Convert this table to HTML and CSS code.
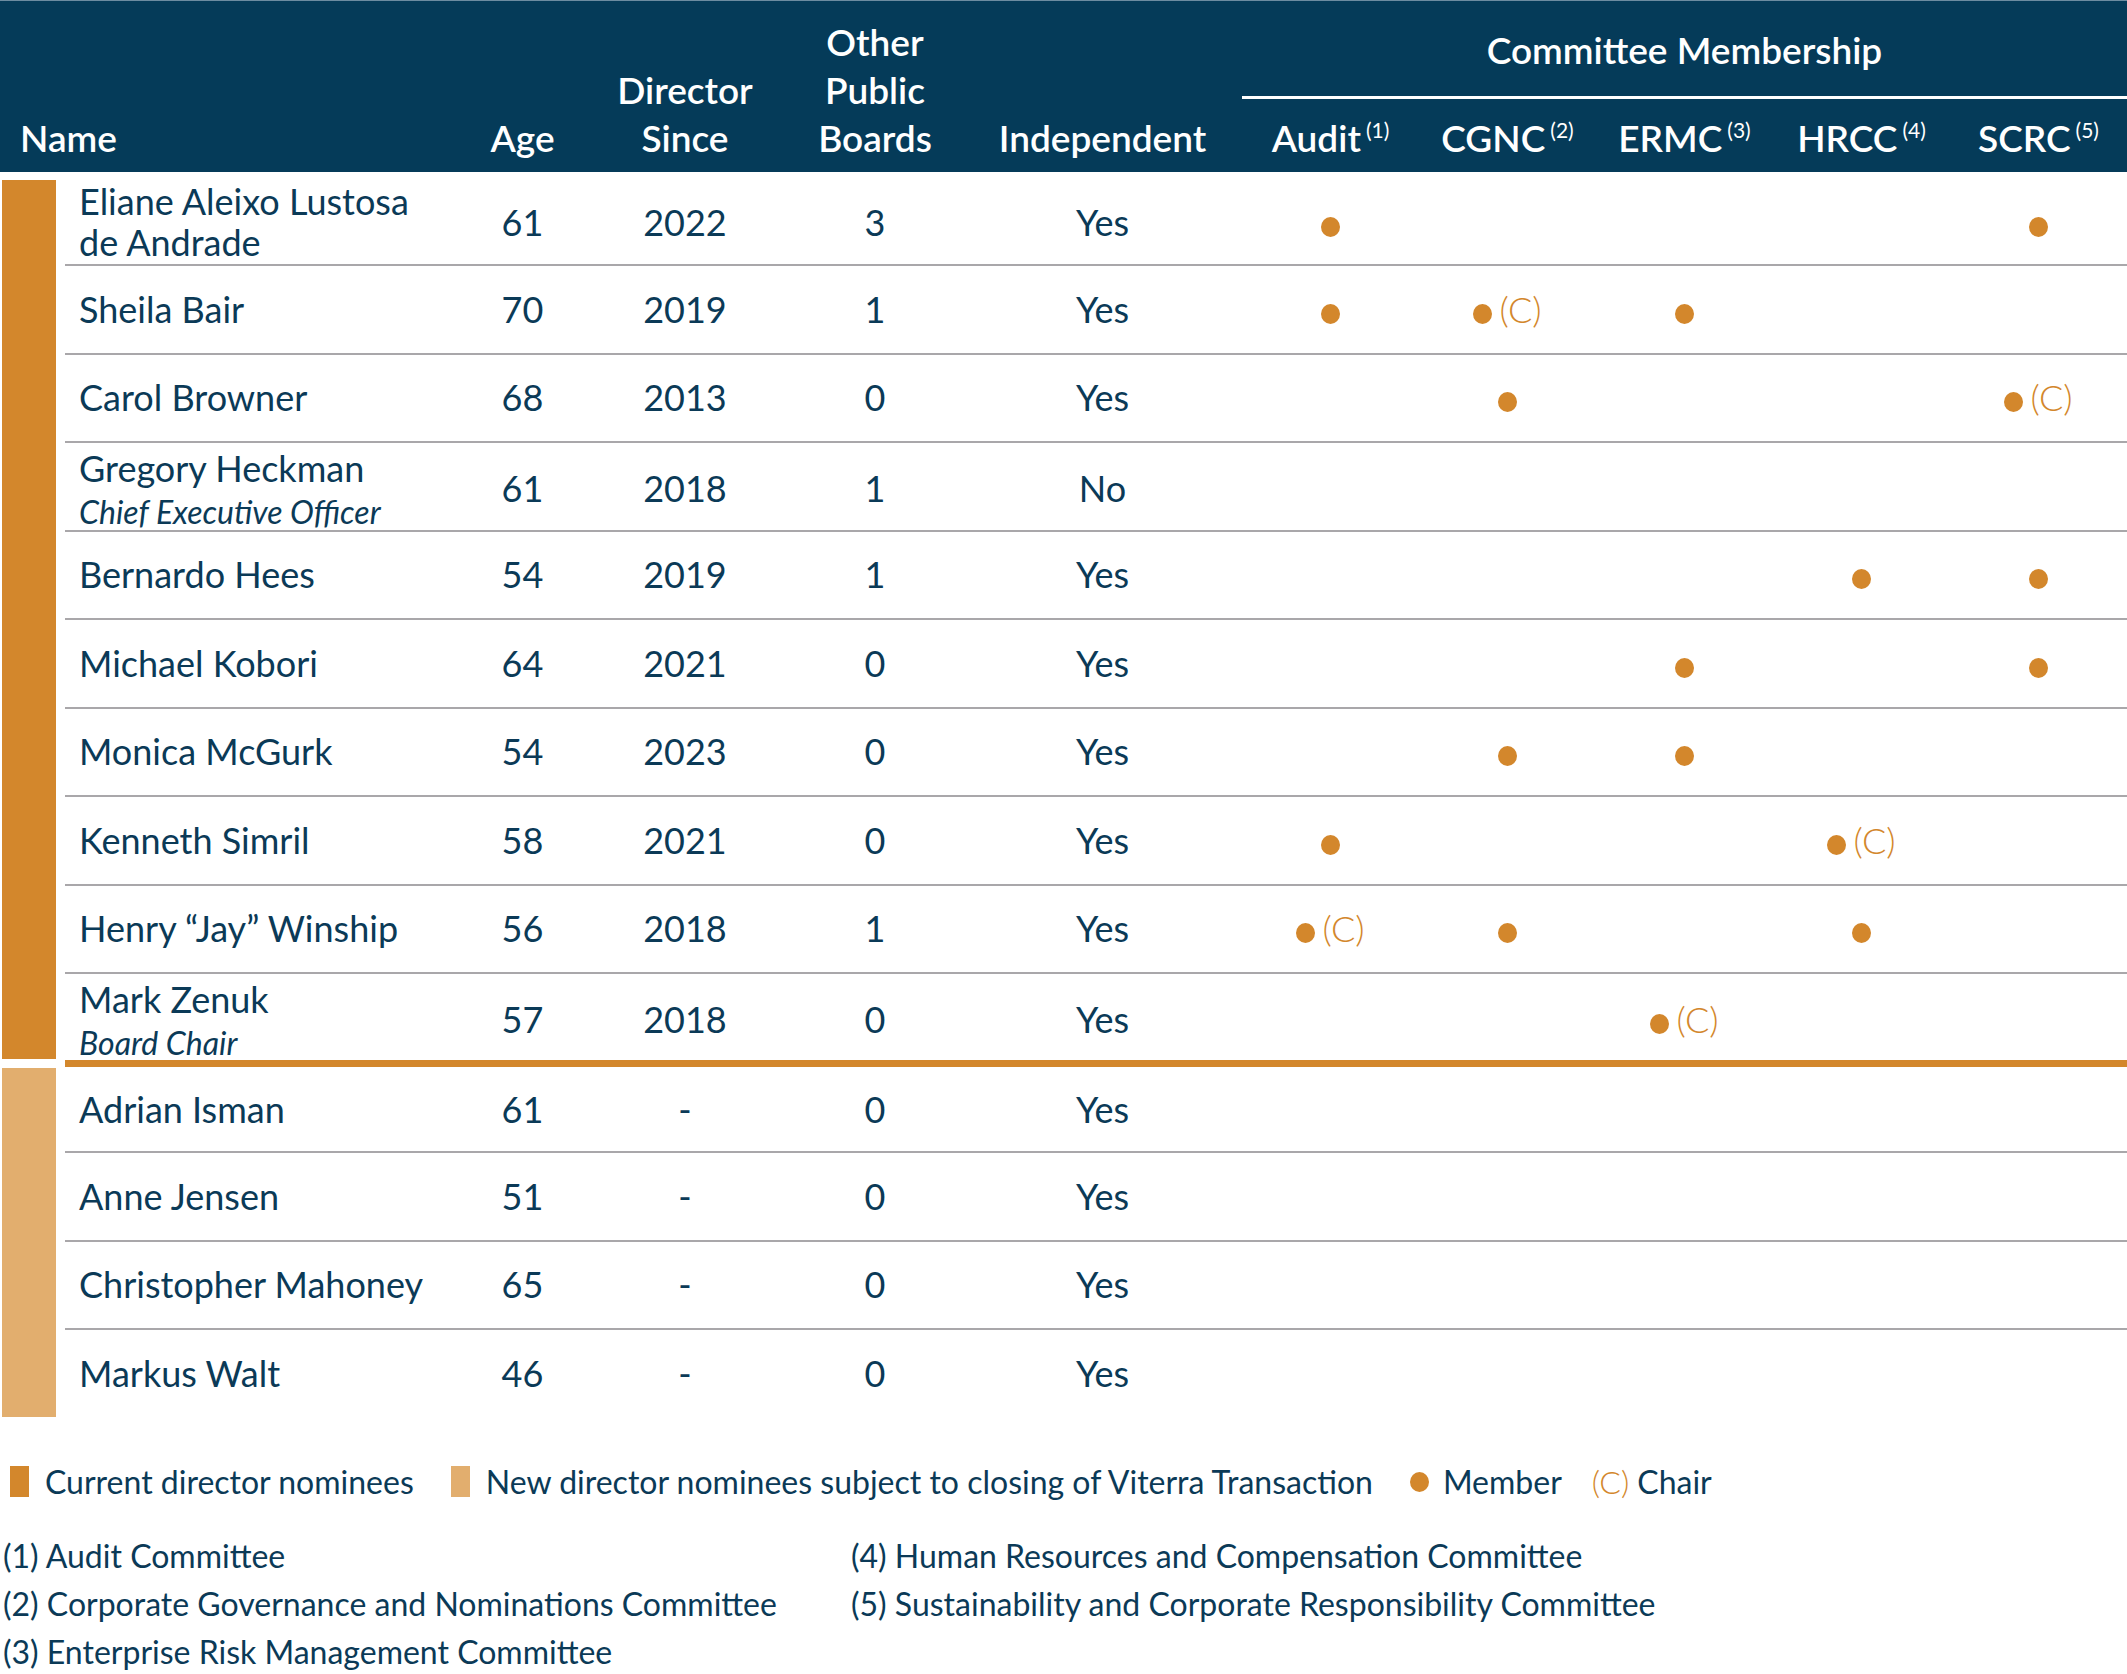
FILE: index.html
```html
<!DOCTYPE html>
<html lang="en">
<head>
<meta charset="utf-8">
<title>Director Nominees</title>
<link rel="stylesheet" href="styles.css">
</head>
<body>
<div class="board">
  <div class="thead">
    <div class="th th-name">Name</div>
    <div class="th">Age</div>
    <div class="th">Director<br>Since</div>
    <div class="th">Other<br>Public<br>Boards</div>
    <div class="th">Independent</div>
    <div class="th-committee">
      <div class="cm-title">Committee Membership</div>
      <div class="cm-rule"></div>
      <div class="cm-cols">
        <div class="th">Audit<sup>(1)</sup></div>
        <div class="th">CGNC<sup>(2)</sup></div>
        <div class="th">ERMC<sup>(3)</sup></div>
        <div class="th">HRCC<sup>(4)</sup></div>
        <div class="th">SCRC<sup>(5)</sup></div>
      </div>
    </div>
  </div>

  <div class="group current">
    <div class="bar"></div>
    <div class="rows">
      <div class="row short">
        <div class="name">Eliane Aleixo Lustosa<br>de Andrade</div>
        <div class="c">61</div><div class="c">2022</div><div class="c">3</div><div class="c">Yes</div>
        <div class="c"><span class="dot"></span></div><div class="c"></div><div class="c"></div><div class="c"></div><div class="c"><span class="dot"></span></div>
      </div>
      <div class="row">
        <div class="name">Sheila Bair</div>
        <div class="c">70</div><div class="c">2019</div><div class="c">1</div><div class="c">Yes</div>
        <div class="c"><span class="dot"></span></div><div class="c"><span class="dot"></span><span class="chair">(C)</span></div><div class="c"><span class="dot"></span></div><div class="c"></div><div class="c"></div>
      </div>
      <div class="row">
        <div class="name">Carol Browner</div>
        <div class="c">68</div><div class="c">2013</div><div class="c">0</div><div class="c">Yes</div>
        <div class="c"></div><div class="c"><span class="dot"></span></div><div class="c"></div><div class="c"></div><div class="c"><span class="dot"></span><span class="chair">(C)</span></div>
      </div>
      <div class="row">
        <div class="name has-role">Gregory Heckman<br><span class="role">Chief Executive Officer</span></div>
        <div class="c">61</div><div class="c">2018</div><div class="c">1</div><div class="c">No</div>
        <div class="c"></div><div class="c"></div><div class="c"></div><div class="c"></div><div class="c"></div>
      </div>
      <div class="row">
        <div class="name">Bernardo Hees</div>
        <div class="c">54</div><div class="c">2019</div><div class="c">1</div><div class="c">Yes</div>
        <div class="c"></div><div class="c"></div><div class="c"></div><div class="c"><span class="dot"></span></div><div class="c"><span class="dot"></span></div>
      </div>
      <div class="row">
        <div class="name">Michael Kobori</div>
        <div class="c">64</div><div class="c">2021</div><div class="c">0</div><div class="c">Yes</div>
        <div class="c"></div><div class="c"></div><div class="c"><span class="dot"></span></div><div class="c"></div><div class="c"><span class="dot"></span></div>
      </div>
      <div class="row">
        <div class="name">Monica McGurk</div>
        <div class="c">54</div><div class="c">2023</div><div class="c">0</div><div class="c">Yes</div>
        <div class="c"></div><div class="c"><span class="dot"></span></div><div class="c"><span class="dot"></span></div><div class="c"></div><div class="c"></div>
      </div>
      <div class="row">
        <div class="name">Kenneth Simril</div>
        <div class="c">58</div><div class="c">2021</div><div class="c">0</div><div class="c">Yes</div>
        <div class="c"><span class="dot"></span></div><div class="c"></div><div class="c"></div><div class="c"><span class="dot"></span><span class="chair">(C)</span></div><div class="c"></div>
      </div>
      <div class="row">
        <div class="name">Henry “Jay” Winship</div>
        <div class="c">56</div><div class="c">2018</div><div class="c">1</div><div class="c">Yes</div>
        <div class="c"><span class="dot"></span><span class="chair">(C)</span></div><div class="c"><span class="dot"></span></div><div class="c"></div><div class="c"><span class="dot"></span></div><div class="c"></div>
      </div>
      <div class="row last">
        <div class="name has-role">Mark Zenuk<br><span class="role">Board Chair</span></div>
        <div class="c">57</div><div class="c">2018</div><div class="c">0</div><div class="c">Yes</div>
        <div class="c"></div><div class="c"></div><div class="c"><span class="dot"></span><span class="chair">(C)</span></div><div class="c"></div><div class="c"></div>
      </div>
    </div>
  </div>

  <div class="divider"><div class="divider-gap"></div><div class="divider-line"></div></div>

  <div class="group new">
    <div class="bar"></div>
    <div class="rows">
      <div class="row shorter">
        <div class="name">Adrian Isman</div>
        <div class="c">61</div><div class="c">-</div><div class="c">0</div><div class="c">Yes</div>
        <div class="c"></div><div class="c"></div><div class="c"></div><div class="c"></div><div class="c"></div>
      </div>
      <div class="row">
        <div class="name">Anne Jensen</div>
        <div class="c">51</div><div class="c">-</div><div class="c">0</div><div class="c">Yes</div>
        <div class="c"></div><div class="c"></div><div class="c"></div><div class="c"></div><div class="c"></div>
      </div>
      <div class="row">
        <div class="name">Christopher Mahoney</div>
        <div class="c">65</div><div class="c">-</div><div class="c">0</div><div class="c">Yes</div>
        <div class="c"></div><div class="c"></div><div class="c"></div><div class="c"></div><div class="c"></div>
      </div>
      <div class="row end">
        <div class="name">Markus Walt</div>
        <div class="c">46</div><div class="c">-</div><div class="c">0</div><div class="c">Yes</div>
        <div class="c"></div><div class="c"></div><div class="c"></div><div class="c"></div><div class="c"></div>
      </div>
    </div>
  </div>
</div>

<div class="legend">
  <div class="lg-item"><span class="swatch swatch-current"></span><span>Current director nominees</span></div>
  <div class="lg-item"><span class="swatch swatch-new"></span><span>New director nominees subject to closing of Viterra Transaction</span></div>
  <div class="lg-item lg-member"><span class="dot"></span><span>Member</span></div>
  <div class="lg-item lg-chair"><span class="chair-l">(C)</span><span>Chair</span></div>
</div>

<div class="notes">
  <div>(1) Audit Committee</div>
  <div>(4) Human Resources and Compensation Committee</div>
  <div>(2) Corporate Governance and Nominations Committee</div>
  <div>(5) Sustainability and Corporate Responsibility Committee</div>
  <div>(3) Enterprise Risk Management Committee</div>
</div>
</body>
</html>
```

FILE: styles.css
```css
* { box-sizing: border-box; }

body {
  margin: 0;
  background: #ffffff;
  font-family: "Lato", "Liberation Sans", sans-serif;
  color: #0b3a57;
  width: 2127px;
}

/* ---------- header ---------- */
.thead {
  display: grid;
  grid-template-columns: 462px 121px 204px 176px 279px 885px;
  align-items: end;
  height: 172px;
  padding-bottom: 10px;
  background: #053b59;
  border-top: 1px solid #6d8ca1;
  color: #ffffff;
}

.th {
  font-size: 37px;
  font-weight: 600;
  line-height: 48px;
  text-align: center;
  white-space: nowrap;
}

.th-name {
  text-align: left;
  padding-left: 20px;
}

.th sup {
  font-size: 21px;
  font-weight: 400;
  line-height: 0;
  vertical-align: 14px;
  margin-left: 5px;
}

.th-committee {
  display: flex;
  flex-direction: column;
}

.cm-title {
  font-size: 37px;
  font-weight: 600;
  line-height: 48px;
  text-align: center;
}

.cm-rule {
  height: 3px;
  margin: 22px 0 15px;
  background: #ffffff;
}

.cm-cols {
  display: grid;
  grid-template-columns: repeat(5, 177px);
}

/* ---------- body ---------- */
.group {
  display: flex;
}

.group.current {
  margin-top: 8px;
}

.bar {
  width: 54px;
  margin-left: 2px;
  margin-right: 9px;
  flex: none;
}

.current .bar { background: #d3872c; }
.new .bar { background: #e2ae6e; }

.rows {
  flex: 1;
}

.row {
  display: grid;
  grid-template-columns: 397px 121px 204px 176px 279px repeat(5, 177px);
  align-items: center;
  height: 88.5px;
  border-bottom: 2px solid #a9a7aa;
  font-size: 36px;
  line-height: 41px;
}

.row.short { height: 86px; }
.row.shorter { height: 85px; }
.row.last { height: 85px; border-bottom: none; }
.row.end { height: 86.5px; border-bottom: none; }

.name {
  padding-left: 14px;
  white-space: nowrap;
}

.name.has-role {
  padding-top: 5px;
}

.role {
  font-style: italic;
  font-size: 32px;
  line-height: 45px;
}

.c {
  text-align: center;
  white-space: nowrap;
}

.dot {
  display: inline-block;
  width: 19px;
  height: 20px;
  border-radius: 50%;
  background: #d3872c;
  vertical-align: -1px;
}

.chair {
  color: #d3872c;
  font-weight: 300;
  margin-left: 7px;
}

.divider {
  display: flex;
  height: 9px;
  padding-top: 1px;
}

.divider-gap {
  width: 65px;
  flex: none;
}

.divider-line {
  flex: 1;
  height: 7px;
  background: #d3872c;
}

/* ---------- legend ---------- */
.legend {
  display: flex;
  align-items: center;
  margin-top: 45px;
  padding-left: 10px;
  font-size: 32px;
  line-height: 40px;
}

.lg-item {
  display: flex;
  align-items: center;
  margin-right: 37px;
}

.lg-item.lg-member {
  margin-right: 30px;
}

.swatch {
  display: inline-block;
  width: 19px;
  height: 31px;
  margin-right: 16px;
}

.swatch-current { background: #d3872c; }
.swatch-new { background: #e2ae6e; }

.lg-member .dot {
  margin-right: 14px;
  vertical-align: 0;
}

.chair-l {
  color: #d3872c;
  font-weight: 300;
  margin-right: 8px;
}

/* ---------- footnotes ---------- */
.notes {
  display: grid;
  grid-template-columns: 848px 1fr;
  margin-top: 30px;
  padding-left: 3px;
  font-size: 32px;
  line-height: 48px;
}
```
